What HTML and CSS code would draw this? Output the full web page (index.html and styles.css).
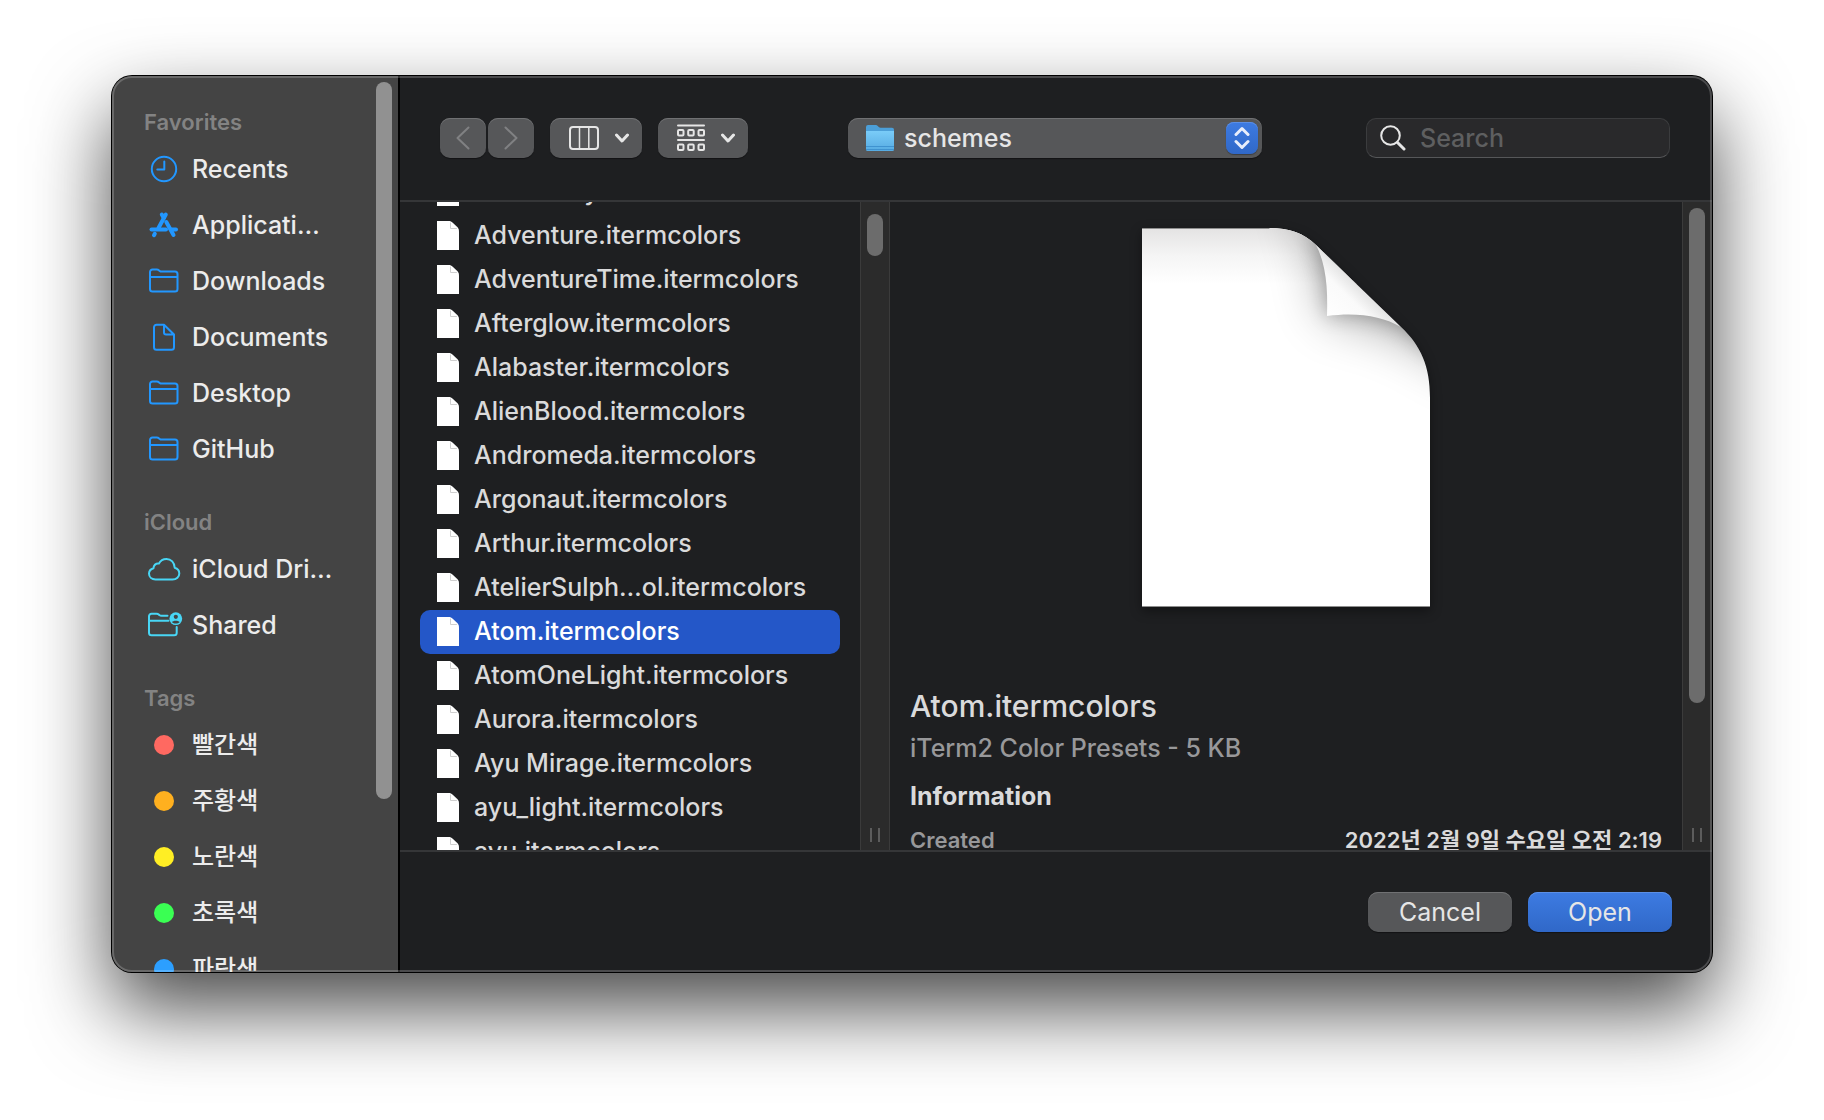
FILE: index.html
```html
<!DOCTYPE html>
<html lang="en">
<head>
<meta charset="utf-8">
<title>Open</title>
<link rel="stylesheet" href="styles.css">
</head>
<body>
<svg class="symbols" aria-hidden="true">
  <defs>
    <linearGradient id="folder-fill" x1="0" y1="0" x2="0" y2="1">
      <stop offset="0" stop-color="#7accf8"/><stop offset="1" stop-color="#56abe2"/>
    </linearGradient>
    <symbol id="folder" viewBox="0 0 34 32">
      <path d="M3 8.500V7a2.500 2.500 0 0 1 2.500-2.500h4.300c1 0 1.600.3 2.300.9l.6.5c.6.500 1.100.7 2 .7H28a2.500 2.500 0 0 1 2.500 2.500v14.900a2.500 2.500 0 0 1-2.500 2.500H5.500A2.500 2.500 0 0 1 3 24zM3 12h27.500"/>
    </symbol>
    <symbol id="file" viewBox="0 0 22 29">
      <path d="M0 0h11.500c2 0 3 .6 4.200 1.700l4.600 4.300c1.200 1.200 1.700 2.400 1.700 4.500V29H0z" fill="#fff"/>
      <path d="M13.500 2v5.500h6" fill="none" stroke="#cfcfcf"/>
    </symbol>
    <symbol id="chevron" viewBox="0 0 14 10">
      <path d="M1.500 2 7 8l5.500-6"/>
    </symbol>
  </defs>
</svg>

<main class="dialog">
  <nav class="sidebar">
    <div class="places">
      <section>
        <h2>Favorites</h2>
        <ul>
          <li><a href="#recents"><svg class="icon" viewBox="0 0 34 32"><circle cx="17" cy="16" r="12.200"/><path d="M17.300 8.500v8h-7"/></svg>Recents</a></li>
          <li><a href="#applications"><svg class="icon apps" viewBox="0 0 34 32"><path d="M18.800 5.500 11.500 19"/><path d="m14.800 5.500 2 3.500"/><path d="M4.500 20.500h14.500"/><path d="m7.800 24.800-.8 1.400"/><path d="m19.300 13 7.200 13"/><path d="M24.500 20.500h4.500"/></svg>Applicati…</a></li>
          <li><a href="#downloads"><svg class="icon"><use href="#folder"/></svg>Downloads</a></li>
          <li><a href="#documents"><svg class="icon" viewBox="0 0 34 32"><path d="M17 3.700H9.500A2.500 2.500 0 0 0 7 6.200v20a2.500 2.500 0 0 0 2.500 2.500h15a2.500 2.500 0 0 0 2.500-2.500V13.500zM17 4v7.500a2 2 0 0 0 2 2h8"/></svg>Documents</a></li>
          <li><a href="#desktop"><svg class="icon"><use href="#folder"/></svg>Desktop</a></li>
          <li><a href="#github"><svg class="icon"><use href="#folder"/></svg>GitHub</a></li>
        </ul>
      </section>
      <section>
        <h2>iCloud</h2>
        <ul>
          <li><a href="#icloud"><svg class="icon cloud" viewBox="0 0 34 32"><path d="M8.500 26.500h17c4 0 6.800-2.700 6.800-6 0-3-1.800-5-4.600-5.800C27.500 9.500 24 6 19.500 6c-3.500 0-6.200 1.800-7.600 4.600-3-.5-5.400 1.700-5.400 4.600C3.800 16 2 18 2 20.600c0 3.400 2.700 5.900 6.500 5.900z"/></svg>iCloud Dri…</a></li>
          <li><a href="#shared"><svg class="icon cloud" viewBox="0 0 34 32"><path d="M20.500 6.800h-6c-1 0-1.500-.2-2-.7l-.7-.5c-.6-.600-1.200-.8-2.200-.8H4.500A2.500 2.500 0 0 0 2 7.300v16.400a2.500 2.500 0 0 0 2.500 2.500h22.700a2.500 2.500 0 0 0 2.500-2.500V18M2 11.700h19.500"/><circle class="solid" cx="28.800" cy="9.700" r="6.400"/><circle class="cut" cx="28.800" cy="7.800" r="2.100"/><path class="cut" d="M25 13.200c.6-2 7-2 7.600 0-1.800 1.800-5.800 1.800-7.600 0z"/></svg>Shared</a></li>
        </ul>
      </section>
      <section class="tags">
        <h2>Tags</h2>
        <ul lang="ko">
          <li><a href="#red"><span class="dot red"></span>빨간색</a></li>
          <li><a href="#orange"><span class="dot orange"></span>주황색</a></li>
          <li><a href="#yellow"><span class="dot yellow"></span>노란색</a></li>
          <li><a href="#green"><span class="dot green"></span>초록색</a></li>
          <li><a href="#blue"><span class="dot blue"></span>파란색</a></li>
        </ul>
      </section>
    </div>
    <div class="sidebar-thumb"></div>
  </nav>

  <div class="content">
    <header class="toolbar">
      <div class="tools">
        <div class="history">
          <button class="control nav" type="button" aria-label="Back" disabled><svg width="14" height="24" viewBox="0 0 14 24"><path d="M12.500 1.500 1.500 12l11 10.500"/></svg></button>
          <button class="control nav" type="button" aria-label="Forward" disabled><svg width="14" height="24" viewBox="0 0 14 24"><path d="M1.500 1.500 12.500 12l-11 10.500"/></svg></button>
        </div>
        <button class="control view" type="button" aria-label="Column view">
          <svg width="30" height="24" viewBox="0 0 30 24"><rect x="1" y="1" width="28" height="22" rx="3" stroke-width="2"/><path d="M10.500 1v22M19.800 1v22" stroke-width="1.500"/></svg>
          <svg class="chevron" width="14" height="10"><use href="#chevron"/></svg>
        </button>
        <button class="control view group" type="button" aria-label="Group items">
          <svg width="28" height="28" viewBox="0 0 28 28"><path d="M1 1.500h26M1 16h26" stroke-width="2"/><g stroke-width="2"><rect x="1" y="6" width="5.500" height="5.500" rx="1"/><rect x="11.200" y="6" width="5.500" height="5.500" rx="1"/><rect x="21.500" y="6" width="5.500" height="5.500" rx="1"/><rect x="1" y="20.500" width="5.500" height="5.500" rx="1"/><rect x="11.200" y="20.500" width="5.500" height="5.500" rx="1"/><rect x="21.500" y="20.500" width="5.500" height="5.500" rx="1"/></g></svg>
          <svg class="chevron" width="14" height="10"><use href="#chevron"/></svg>
        </button>
      </div>
      <div class="control location">
        <svg width="28" height="28" viewBox="0 0 28 28"><path d="M0 3a2 2 0 0 1 2-2h7.500c1 0 1.500.3 2 .8L12.800 3c.5.500 1 .7 1.800.7H26a2 2 0 0 1 2 2V9H0z" fill="#4c9fd8"/><path d="M0 7h28v18.500a1.500 1.500 0 0 1-1.500 1.500h-25A1.500 1.500 0 0 1 0 25.500z" fill="url(#folder-fill)"/><path d="M0 22.500h28M0 25.500h28" stroke="#3f93d0"/></svg>
        <select aria-label="Folder"><option>schemes</option></select>
        <span class="stepper"><svg width="16" height="24" viewBox="0 0 16 24"><path d="M2 8.500 8 2.500l6 6M2 15.500l6 6 6-6"/></svg></span>
      </div>
      <label class="search">
        <svg width="26" height="26" viewBox="0 0 26 26"><circle cx="10.500" cy="10.500" r="9.300" stroke-width="2"/><path d="m17.500 17.500 6.500 6.500" stroke-width="3"/></svg>
        <input type="search" placeholder="Search" aria-label="Search">
      </label>
    </header>

    <div class="browser">
      <ul class="files">
        <li><svg><use href="#file"/></svg>Abernathy.itermcolors</li>
        <li><svg><use href="#file"/></svg>Adventure.itermcolors</li>
        <li><svg><use href="#file"/></svg>AdventureTime.itermcolors</li>
        <li><svg><use href="#file"/></svg>Afterglow.itermcolors</li>
        <li><svg><use href="#file"/></svg>Alabaster.itermcolors</li>
        <li><svg><use href="#file"/></svg>AlienBlood.itermcolors</li>
        <li><svg><use href="#file"/></svg>Andromeda.itermcolors</li>
        <li><svg><use href="#file"/></svg>Argonaut.itermcolors</li>
        <li><svg><use href="#file"/></svg>Arthur.itermcolors</li>
        <li><svg><use href="#file"/></svg>AtelierSulph…ol.itermcolors</li>
        <li class="selected"><svg><use href="#file"/></svg>Atom.itermcolors</li>
        <li><svg><use href="#file"/></svg>AtomOneLight.itermcolors</li>
        <li><svg><use href="#file"/></svg>Aurora.itermcolors</li>
        <li><svg><use href="#file"/></svg>Ayu Mirage.itermcolors</li>
        <li><svg><use href="#file"/></svg>ayu_light.itermcolors</li>
        <li><svg><use href="#file"/></svg>ayu.itermcolors</li>
      </ul>
      <div class="track"><div class="thumb short"></div><div class="grip"></div></div>
      <section class="preview">
        <svg class="page" width="288" height="380" viewBox="0 0 288 380">
          <defs>
            <clipPath id="page-clip"><path d="M0 0H127C148 0 161 5 174 17L259 99C279 118 288 138 288 170V379H0z"/></clipPath>
            <linearGradient id="page-top" x1="0" y1="0" x2="0" y2="1"><stop offset="0" stop-color="#e4e3e3"/><stop offset=".5" stop-color="#f5f5f5"/><stop offset="1" stop-color="#fff"/></linearGradient>
            <linearGradient id="curl" gradientUnits="userSpaceOnUse" x1="187" y1="92" x2="222" y2="56"><stop offset="0" stop-color="#fff"/><stop offset=".6" stop-color="#fafafa"/><stop offset="1" stop-color="#dcdcdc"/></linearGradient>
            <filter id="soft" x="-100%" y="-100%" width="300%" height="300%"><feGaussianBlur stdDeviation="26"/></filter>
            <filter id="tight" x="-100%" y="-100%" width="300%" height="300%"><feGaussianBlur stdDeviation="10"/></filter>
          </defs>
          <g clip-path="url(#page-clip)">
            <path d="M0 0h288v380H0z" fill="#fff"/>
            <path d="M0 0h288v56H0z" fill="url(#page-top)"/>
            <path d="M155-40C182 25 186 50 185 88C215 84 250 92 340 150V-40z" fill="#000" opacity=".38" filter="url(#soft)"/>
            <path d="M170 10C184 36 186 60 185 88C215 84 240 88 259 99L300 130V0z" fill="#000" opacity=".26" filter="url(#tight)"/>
            <path d="M174 17C184 36 186 60 185 88C215 84 240 88 259 99z" fill="url(#curl)"/>
            <path d="M0 .5h127M0 378.500h288" fill="none" stroke="#8e8e8e"/>
          </g>
        </svg>
        <h1>Atom.itermcolors</h1>
        <p class="kind">iTerm2 Color Presets - 5 KB</p>
        <h2>Information</h2>
        <dl><dt>Created</dt><dd lang="ko">2022년 2월 9일 수요일 오전 2:19</dd></dl>
      </section>
      <div class="track last"><div class="thumb long"></div><div class="grip"></div></div>
    </div>

    <footer class="actions">
      <button class="control" type="button">Cancel</button>
      <button class="control primary" type="button">Open</button>
    </footer>
  </div>
</main>
</body>
</html>
```
FILE: styles.css
```css
* {
  box-sizing: border-box;
}

body {
  margin: 0;
  height: 100vh;
  padding: 76px 112px 148px;
  background: #fff;
  font: 500 25px/40px Inter, "Noto Sans CJK KR", sans-serif;
  color: #dadadb;
  overflow: hidden;
}

h1, h2, p, ul, dl, dd {
  margin: 0;
  padding: 0;
}

ul {
  list-style: none;
}

svg {
  flex: none;
  fill: none;
  stroke-linecap: round;
  stroke-linejoin: round;
}

.symbols {
  position: absolute;
  width: 0;
  height: 0;
}

.dialog {
  position: relative;
  display: grid;
  grid-template-columns: 288px minmax(0, 1fr);
  height: 100%;
  border-radius: 20px;
  background: #1e1f21;
  box-shadow: 0 0 0 1px #000, 0 36px 80px rgba(0, 0, 0, .72);
}

/* light rim drawn over the window's edge */
.dialog::after {
  content: "";
  position: absolute;
  inset: 0;
  border: 2px solid rgba(255, 255, 255, .2);
  border-radius: 20px;
  pointer-events: none;
}

/* Sidebar */
.sidebar {
  display: flex;
  min-height: 0;
  overflow: hidden;
  border-right: 2px solid #000;
  border-radius: 20px 0 0 20px;
  background: #444;
}

.places {
  flex: 1;
  min-width: 0;
  padding-top: 27px;
}

.places section + section {
  margin-top: 26px;
}

.places h2 {
  padding-left: 32px;
  font-size: 22px;
  font-weight: 600;
  line-height: 38px;
  color: #838383;
}

.places a {
  display: flex;
  align-items: center;
  gap: 11px;
  height: 56px;
  padding-left: 35px;
  color: #ececec;
  text-decoration: none;
  white-space: nowrap;
}

.icon {
  width: 34px;
  height: 32px;
  stroke: #2297ff;
  stroke-width: 2;
  overflow: visible;
}

.icon.apps {
  stroke-width: 4;
}

.icon.cloud {
  stroke: #48d6f5;
}

.icon .solid {
  fill: #48d6f5;
  stroke: none;
}

.icon .cut {
  fill: #444;
  stroke: none;
}

.tags ul {
  font-size: 24px;
}

.dot {
  width: 20px;
  height: 20px;
  margin: 0 7px;
  border-radius: 50%;
}

.red { background: #ff6961; }
.orange { background: #ffb01f; }
.yellow { background: #ffee24; }
.green { background: #3aff53; }
.blue { background: #2c9fff; }

.sidebar-thumb {
  width: 16px;
  height: 80%;
  margin: 6px 6px 0 0;
  border-radius: 8px;
  background: #919191;
}

/* Right-hand side */
.content {
  display: flex;
  flex-direction: column;
  min-width: 0;
  min-height: 0;
}

.toolbar {
  display: grid;
  grid-template-columns: 1fr 414px 1fr;
  align-items: center;
  height: 126px;
  padding: 0 42px 0 40px;
  border-bottom: 2px solid #353638;
}

.tools {
  display: flex;
  gap: 16px;
}

.history {
  display: flex;
  gap: 2px;
}

.control {
  height: 40px;
  padding: 0;
  border: 0;
  border-radius: 10px;
  background: #565759;
  box-shadow: inset 0 1px #707173, 0 1px 1px rgba(0, 0, 0, .4);
  color: #e6e6e6;
  font: inherit;
}

button.control {
  display: flex;
  align-items: center;
  justify-content: center;
}

.nav {
  width: 46px;
  stroke: #808183;
  stroke-width: 2;
}

.view {
  gap: 16px;
  width: 92px;
  padding-left: 6px;
  stroke: #e6e6e6;
}

.group {
  width: 90px;
}

.chevron {
  stroke-width: 3;
}

.location {
  display: flex;
  align-items: center;
  padding: 0 4px 0 18px;
}

.location select {
  flex: 1;
  height: 40px;
  padding: 0 10px;
  border: 0;
  appearance: none;
  background: none;
  color: inherit;
  font: inherit;
}

.stepper {
  display: flex;
  align-items: center;
  justify-content: center;
  width: 32px;
  height: 32px;
  border-radius: 8px;
  background: linear-gradient(#3d7be2, #3068c8);
  box-shadow: inset 0 1px #5b8fe6, 0 1px 1px rgba(0, 0, 0, .3);
  stroke: #e8eefb;
  stroke-width: 3;
}

.search {
  display: flex;
  align-items: center;
  justify-self: end;
  gap: 14px;
  width: 304px;
  height: 40px;
  padding: 0 13px;
  border: 1px solid #3b3c3e;
  border-bottom-color: #565759;
  border-radius: 10px;
  background: #29292b;
  stroke: #e6e6e6;
}

.search input {
  flex: 1;
  min-width: 0;
  height: 38px;
  padding: 0;
  border: 0;
  outline: 0;
  appearance: none;
  background: none;
  color: #e6e6e6;
  font: inherit;
}

.search input::placeholder {
  color: #5e5f60;
}

/* File list and preview */
.browser {
  flex: 1;
  display: grid;
  grid-template-columns: 460px 30px minmax(0, 1fr) 30px;
  grid-template-rows: minmax(0, 1fr);
  min-height: 0;
  overflow: hidden;
}

/* the list is scrolled part of a row down */
.files {
  margin-top: -32px;
  padding: 0 20px;
}

.files li {
  display: flex;
  align-items: center;
  gap: 15px;
  height: 44px;
  padding: 0 0 2px 17px;
  border-radius: 10px;
  white-space: nowrap;
}

.files svg {
  width: 22px;
  height: 29px;
}

.files .selected {
  background: #2457c8;
  color: #fff;
}

.track {
  display: flex;
  flex-direction: column;
  align-items: center;
  justify-content: space-between;
  padding: 6px 0 8px;
  border: solid #3b3b3b;
  border-width: 0 1px;
  background: #2b2b2b;
}

.track.last {
  padding-right: 2px;
  border-right: 0;
}

.thumb {
  width: 16px;
  border-radius: 8px;
  background: #6c6c6c;
}

.short {
  height: 42px;
  margin-top: 6px;
}

.long {
  height: 78%;
}

.grip {
  width: 10px;
  height: 14px;
  border: solid #5c5c5c;
  border-width: 0 2px;
}

.preview {
  display: flex;
  flex-direction: column;
  padding: 26px 20px 0;
  overflow: hidden;
}

.page {
  align-self: center;
  margin-bottom: 78px;
  filter: drop-shadow(0 4px 6px rgba(0, 0, 0, .4));
}

.preview h1 {
  margin-bottom: 2px;
  font-size: 30px;
  font-weight: 500;
  line-height: 40px;
}

.kind {
  margin-bottom: 8px;
  color: #98989a;
}

.preview h2 {
  font-size: 25px;
  font-weight: 700;
  line-height: 40px;
}

.preview dl {
  display: flex;
  justify-content: space-between;
  padding-top: 4px;
  font-size: 22px;
  font-weight: 600;
  white-space: nowrap;
}

.preview dt {
  color: #98989a;
}

/* Footer */
.actions {
  display: flex;
  justify-content: flex-end;
  gap: 16px;
  height: 122px;
  padding: 40px 40px 0;
  border-top: 2px solid #353638;
}

.actions .control {
  width: 144px;
  font-weight: 400;
}

.actions .primary {
  background: linear-gradient(#3d7be2, #3068c8);
  box-shadow: inset 0 1px #5b8fe6, 0 1px 1px rgba(0, 0, 0, .4);
}
```
